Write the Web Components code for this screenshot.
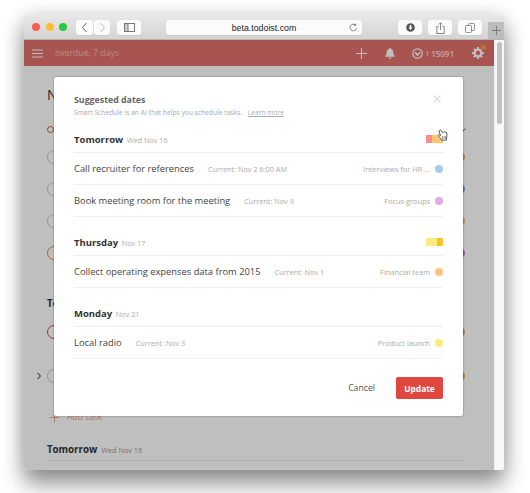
<!DOCTYPE html>
<html><head><meta charset="utf-8"><style>
html,body{margin:0;height:493px;overflow:hidden;background:#fff;font-family:"Open Sans",sans-serif}
</style></head><body>
<br-window>
  <task-list slot="content"></task-list>
  <schedule-modal slot="modal">
    <day-group name="Tomorrow" date="Wed Nov 16" strip="#f99090:6,#ffc56f:11">
      <sug-row text="Call recruiter for references" cur="Current: Nov 2 6:00 AM" project="Interviews for HR ..." dot="#a9c9ea"></sug-row>
      <sug-row text="Book meeting room for the meeting" cur="Current: Nov 9" project="Focus groups" dot="#e2a9e4"></sug-row>
    </day-group>
    <day-group name="Thursday" date="Nov 17" strip="#f9ec7f:11,#fdc02f:6">
      <sug-row text="Collect operating expenses data from 2015" cur="Current: Nov 1" project="Financial team" dot="#ffc27a"></sug-row>
    </day-group>
    <day-group name="Monday" date="Nov 21">
      <sug-row text="Local radio" cur="Current: Nov 3" project="Product launch" dot="#f9ec7f"></sug-row>
    </day-group>
  </schedule-modal>
</br-window>
<script>
function def(name, html){
  customElements.define(name, class extends HTMLElement{
    connectedCallback(){
      if(this.shadowRoot) return;
      const r=this.attachShadow({mode:'open'});
      const a=n=>this.getAttribute(n)||'';
      r.innerHTML=typeof html==='function'?html(a):html;
    }
  });
}
def('br-window',`<style>
:host{display:block;position:absolute;left:24px;top:14px;width:480px;height:456px;border-radius:4px 4px 3px 3px;
 box-shadow:0 14px 22px rgba(0,0,0,.42),0 0 20px rgba(0,0,0,.13);background:#fff;overflow:visible}
.wrap{display:flex;flex-direction:column;height:100%;border-radius:inherit;overflow:hidden}
.body{flex:1;display:flex;position:relative;min-height:0}
.page{flex:1;display:flex;flex-direction:column;min-width:0}
.sb{width:10px;background:#f8f8f8;display:flex;justify-content:center;padding-top:2px;box-sizing:border-box;border-left:1px solid #eee}
.thumb{width:5px;height:82px;border-radius:3px;background:#c1c1c1}
.overlay{position:absolute;left:0;top:0;right:10px;bottom:0;background:rgba(0,0,0,.25)}
::slotted([slot=modal]){position:absolute;left:30px;top:37px}
</style><div class="wrap"><br-toolbar></br-toolbar>
<div class="body"><div class="page"><app-bar></app-bar><slot name="content"></slot></div><div class="sb"><div class="thumb"></div></div><div class="overlay"></div><slot name="modal"></slot></div></div>`);

const btn=(w,svg)=>`<div class="btn" style="width:${w}px">${svg}</div>`;
def('br-toolbar',`<style>
:host{display:flex;align-items:flex-start;height:26px;box-sizing:border-box;padding:6px 0 0 8px;flex:none;
 background:linear-gradient(#e9e9e9,#d3d3d3);border-bottom:1px solid #b5b5b5;position:relative}
.lights{display:flex;gap:5.5px;margin-top:3px}
.lights i{width:8px;height:8px;border-radius:50%;display:block}
.btn{height:15px;background:#fbfbfb;border-radius:3px;display:flex;align-items:center;justify-content:center;box-shadow:0 .5px 0 #c4c4c4;flex:none}
.nav{display:flex;gap:1px;margin-left:9px}
.url{width:196px;margin-left:25px;height:15px;background:#fbfbfb;border-radius:3px;box-shadow:0 .5px 0 #c4c4c4;position:relative;
 display:flex;align-items:center;justify-content:center;font:8.8px "Liberation Sans",sans-serif;color:#222}
.url svg{position:absolute;right:4px;top:3px}
.tabs{display:flex;gap:6px;margin-left:36px}
.plus{position:absolute;right:0;bottom:0;width:16px;height:17px;background:#bdbdbd;display:flex;align-items:center;justify-content:center}
svg{display:block}
</style>
<div class="lights"><i style="background:#fc5c57"></i><i style="background:#fdbb2e"></i><i style="background:#2ac83f"></i></div>
<div class="nav">${btn(17,'<svg width="7" height="11" viewBox="0 0 7 11"><path d="M5.5 1 1.5 5.5 5.5 10" fill="none" stroke="#666" stroke-width="1"/></svg>')}${btn(16,'<svg width="7" height="11" viewBox="0 0 7 11"><path d="M1.5 1 5.5 5.5 1.5 10" fill="none" stroke="#bbb" stroke-width="1"/></svg>')}</div>
<div style="margin-left:7px">${btn(24,'<svg width="11" height="9" viewBox="0 0 11 9"><rect x=".5" y=".5" width="10" height="8" fill="none" stroke="#777"/><rect x="1" y="1" width="3" height="7" fill="#ccc"/><path d="M4 .5v8" stroke="#777"/></svg>')}</div>
<div class="url">beta.todoist.com<svg width="9" height="9" viewBox="0 0 9 9"><path d="M7.6 5.2A3.3 3.3 0 1 1 6.4 1.9" fill="none" stroke="#777" stroke-width=".9"/><path d="M5.4.2 7.6 2 5.4 3.4z" fill="#777"/></svg></div>
<div class="tabs">${btn(24,'<svg width="9" height="9" viewBox="0 0 9 9"><circle cx="4.5" cy="4.5" r="4.3" fill="#555"/><path d="M3.7 2h1.6v2.4h1.3L4.5 7 2.4 4.4h1.3z" fill="#fff"/></svg>')}${btn(24,'<svg width="9" height="12" viewBox="0 0 9 12"><path d="M2.5 4.5H.8v7h7.4v-7H6.5M4.5 8V1M2.8 2.5 4.5.8l1.7 1.7" fill="none" stroke="#777" stroke-width=".9"/></svg>')}${btn(24,'<svg width="10" height="10" viewBox="0 0 10 10"><rect x="3.5" y=".5" width="6" height="7" rx="1" fill="none" stroke="#777" stroke-width=".8"/><rect x=".5" y="2.5" width="6" height="7" rx="1" fill="#fbfbfb" stroke="#777" stroke-width=".8"/></svg>')}</div>
<div class="plus"><svg width="9" height="9" viewBox="0 0 9 9"><path d="M4.5 0v9M0 4.5h9" stroke="#777" stroke-width=".9"/></svg></div>`);

def('app-bar',`<style>
:host{display:flex;align-items:center;height:26px;flex:none;background:#e1716b;color:#fff;padding-left:8px;position:relative;font-size:8.7px;box-sizing:border-box}
svg{display:block;flex:none}
.t{margin-left:12px;color:#f3b9b5;flex:1}
.n{font-size:8px;font-weight:600;color:#fae2e0;margin-left:2.5px;white-space:nowrap}
.g{position:relative;margin-left:18px;margin-right:10px}
.g b{position:absolute;right:-2px;top:-2px;width:5px;height:5px;border-radius:50%;background:#f7a334;box-shadow:0 0 0 .5px #e1716b}
</style>
<svg width="11" height="9" viewBox="0 0 11 9"><path d="M0 1h11M0 4.5h11M0 8h11" stroke="#fff" stroke-width="1.2"/></svg>
<span class="t">overdue, 7 days</span>
<svg width="11" height="11" viewBox="0 0 11 11"><path d="M5.5 0v11M0 5.5h11" stroke="#fff" stroke-width="1.1"/></svg>
<svg style="margin-left:18px" width="10" height="11" viewBox="0 0 10 11"><path d="M5 0c.6 0 1 .4 1 .9 1.6.5 2.300 1.700 2.300 3.400 0 2 .4 2.800 1.400 3.700v.7H.3V8c1-.9 1.400-1.700 1.400-3.700C1.700 2.600 2.400 1.400 4 .9 4 .4 4.400 0 5 0zM3.700 9.600h2.600A1.300 1.300 0 0 1 3.700 9.600z" fill="#fff"/></svg>
<svg style="margin-left:17px" width="11" height="11" viewBox="0 0 11 11"><circle cx="5.500" cy="5.500" r="4.700" fill="none" stroke="#fff" stroke-width="1.200"/><path d="M3 4.200 5.500 7 8 4.200" fill="none" stroke="#fff" stroke-width="1.500"/></svg>
<svg style="margin-left:3px" width="3" height="5" viewBox="0 0 3 5"><path d="M1.500 0 3 2H2v3H1V2H0z" fill="#f0c3c0"/></svg><span class="n">15091</span>
<div class="g"><svg width="12" height="12" viewBox="0 0 12 12"><circle cx="6" cy="6" r="3.300" fill="none" stroke="#fff" stroke-width="2.200"/><path d="M6 0v2.500M6 9.500V12M0 6h2.500M9.500 6H12M1.800 1.800 3.500 3.500M8.500 8.500l1.700 1.700M1.800 10.200 3.500 8.500M8.500 3.500l1.700-1.700" stroke="#fff" stroke-width="1.900"/></svg><b></b></div>`);

def('bg-task',a=>`<style>
:host{display:flex;align-items:center;height:${a('h')||32}px;flex:none;position:relative;box-sizing:border-box}
i{width:14px;height:14px;box-sizing:border-box;border-radius:50%;border:${a('ring')?'1.500px':'1px'} solid ${a('ring')||'#ccc'};display:block}
b{width:10px;height:10px;border-radius:50%;background:${a('dot')};display:block;margin-right:29px;margin-left:auto}
svg{display:block;margin-left:-11px;margin-right:5px}
</style>${a('chev')?'<svg width="6" height="8" viewBox="0 0 6 8"><path d="M1.500 1 4.500 4 1.500 7" fill="none" stroke="#777" stroke-width="1.200"/></svg>':''}<i></i><b></b>`);

def('task-list',`<style>
:host{display:flex;flex-direction:column;flex:1;background:#fff;padding:17px 0 0 23px;box-sizing:border-box;color:#333;min-height:0;overflow:hidden}
h1{font-size:14px;font-weight:400;margin:0;line-height:24px;height:24px}
.od{display:flex;align-items:center;height:13px;margin:16px 0 0}
.od svg{margin-left:auto;margin-right:28px}
.od span{width:7px;height:7px;box-sizing:border-box;border:1.500px solid #db4c3f;border-radius:50%;display:block}
.to{font-size:9.700px;font-weight:700;margin:0;line-height:14px;height:14px;flex:none}
.to span{font-size:7.300px;font-weight:400;color:#999;margin-left:4px}
.rows{margin-top:5px;display:flex;flex-direction:column;flex:none}
.add{display:flex;align-items:center;margin-left:3px;height:14px;color:#db4c3f;font-size:8.700px;gap:8px;margin-top:8px;opacity:.55;flex:none}
.rule{height:1px;background:#e8e8e8;margin:3.500px 0 0 0;width:418px;flex:none}
</style>
<h1>N</h1>
<div class="od"><span></span><svg width="6" height="4" viewBox="0 0 6 4"><path d="M.5.5 3 3 5.500.5" fill="none" stroke="#555"/></svg></div>
<div class="rows">
<bg-task dot="#f5a623"></bg-task><bg-task dot="#6f9fd6"></bg-task><bg-task dot="#eebc4e"></bg-task><bg-task ring="#f0873a" dot="#c471c9"></bg-task>
</div>
<div class="to" style="margin-top:28px">To</div>
<div class="rows" style="margin-top:3px"><bg-task ring="#db4c3f" dot="#f5a04a" h="36"></bg-task><bg-task chev="1" dot="#f5a04a" h="52"></bg-task></div>
<div class="add"><svg width="9" height="9" viewBox="0 0 9 9"><path d="M4.500 0v9M0 4.500h9" stroke="#db4c3f"/></svg><span>Add task</span></div>
<div class="to" style="margin-top:18.500px">Tomorrow<span>Wed Nov 16</span></div>
<div class="rule"></div>`);

def('schedule-modal',`<style>
:host{display:flex;flex-direction:column;width:409px;height:339px;box-sizing:border-box;padding:17px 20px 17px;background:#fff;border-radius:2px;box-shadow:0 0 2px rgba(0,0,0,.45);color:#444}
.h{position:relative;height:28px;flex:none}
.ti{font-size:8.800px;font-weight:700;color:#666;line-height:12px}
.su{font-size:6.700px;color:#aaa;line-height:11px;margin-top:1px;white-space:nowrap}
.su u{margin-left:4px}
.x{position:absolute;right:2px;top:1px}
.days{flex:1;display:flex;flex-direction:column;margin-top:6px}
.f{display:flex;justify-content:flex-end;align-items:center;gap:21px;flex:none;height:22px}
.c{font-size:8.700px;color:#555}
.u{width:47px;height:22px;box-sizing:border-box;background:#e0473f;border-radius:2px;color:#fff;font-size:8.400px;font-weight:700;display:flex;align-items:center;justify-content:center}
.cur{position:absolute;left:383px;top:52px}
::slotted(day-group){margin-bottom:14px}
</style>
<div class="h"><div class="ti">Suggested dates</div><div class="su">Smart Schedule is an AI that helps you schedule tasks. <u>Learn more</u></div>
<svg class="x" width="8" height="8" viewBox="0 0 8 8"><path d="M.5.5l7 7M7.500.5l-7 7" stroke="#ddd" stroke-width="1.200"/></svg></div>
<div class="days"><slot></slot></div>
<div class="f"><span class="c">Cancel</span><span class="u">Update</span></div>
<svg class="cur" width="11" height="14" viewBox="0 0 11 14"><path d="M2.800 1.200c.6-.5 1.300-.2 1.600.4l1 2c.2-.7 1-.9 1.500-.4.100-.5 1-.6 1.400 0 .3-.3 1-.2 1.200.3.500 1.200.600 2.700.300 4-.2 1.100-.3 2-.5 3.600H4.500C4.200 9.900 2.900 8.800 1.600 7.200 1 6.500 1.500 5.500 2.300 5.800l1.300.8-1.400-3.700c-.2-.6 0-1.300.6-1.700z" fill="#fff" stroke="#333" stroke-width=".8"/><path d="M5.500 7v3M7 7v3M8.500 7v3" stroke="#333" stroke-width=".5"/></svg>`);

def('day-group',a=>{
 const strip=a('strip')?`<div class="s">${a('strip').split(',').map(p=>{const [c,w]=p.split(':');return `<i style="background:${c};width:${w}px"></i>`}).join('')}</div>`:'';
 return `<style>
:host{display:block}
.hd{display:flex;align-items:center;height:25px;border-bottom:1px solid #eee;box-sizing:border-box;padding-bottom:2px}
.n{font-size:9.500px;font-weight:700;color:#333}
.d{font-size:7.300px;color:#aaa;margin-left:3.500px;flex:1;padding-top:1px}
.s{display:flex;height:8px}.s i{display:block;height:8px}
</style><div class="hd"><span class="n">${a('name')}</span><span class="d">${a('date')}</span>${strip}</div><slot></slot>`});

def('sug-row',a=>`<style>
:host{display:flex;align-items:center;height:32px;border-bottom:1px solid #f1f1f1;box-sizing:border-box;white-space:nowrap}
.t{font-size:9.350px;color:#444}
.c{font-size:7.300px;color:#aaa;margin-left:14px;flex:1;padding-top:1px}
.p{font-size:7.400px;color:#aaa}
i{width:8px;height:8px;border-radius:50%;background:${a('dot')};margin-left:5px;display:block}
</style><span class="t">${a('text')}</span><span class="c">${a('cur')}</span><span class="p">${a('project')}</span><i></i>`);
</script>
</body></html>
